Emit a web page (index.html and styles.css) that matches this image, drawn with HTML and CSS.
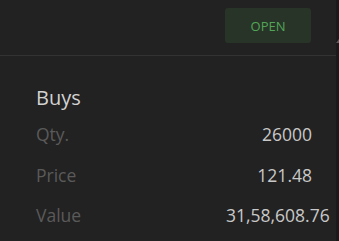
FILE: index.html
```html
<!DOCTYPE html>
<html>
<head>
<meta charset="utf-8">
<link rel="stylesheet" href="styles.css">
</head>
<body>
<div class="page">
  <div class="main">
    <div class="header">
      <button class="open-btn">OPEN</button>
    </div>
    <div class="section">
      <div class="title">Buys</div>
      <div class="row"><span class="label">Qty.</span><span class="value">26000</span></div>
      <div class="row"><span class="label">Price</span><span class="value">121.48</span></div>
      <div class="row"><span class="label">Value</span><span class="value">31,58,608.76</span></div>
    </div>
  </div>
  <div class="scroll"><span class="arrow"></span></div>
</div>
</body>
</html>
```
FILE: styles.css
```css
html, body {
  margin: 0;
  padding: 0;
  background: #222222;
  width: 339px;
  height: 241px;
  overflow: hidden;
}
.page {
  display: flex;
  height: 241px;
  font-family: "Open Sans", "Liberation Sans", sans-serif;
}
.main {
  flex: 1;
}
.header {
  height: 55px;
  display: flex;
  justify-content: flex-end;
  align-items: flex-start;
  padding-right: 25px;
  border-bottom: 1px solid #333333;
}
.open-btn {
  margin-top: 8px;
  width: 86px;
  height: 35px;
  border: none;
  border-radius: 3px;
  background: #283428;
  color: #52a556;
  font-family: "Open Sans", "Liberation Sans", sans-serif;
  font-size: 13px;
  padding: 0;
}
.section {
  padding: 29px 24px 0 36px;
}
.title {
  font-size: 20px;
  line-height: 26px;
  color: #d2d2d2;
  margin-bottom: 3.2px;
}
.row {
  display: flex;
  font-size: 17.5px;
  line-height: 40.6px;
}
.label {
  flex: 1;
  color: #5a5a5a;
}
.value {
  width: 86px;
  text-align: right;
  white-space: nowrap;
  color: #c8c8c8;
}
.scroll {
  width: 3px;
  background: #1a1a1a;
  position: relative;
}
.arrow {
  position: absolute;
  top: 39px;
  left: 0;
  width: 0;
  height: 0;
  border-left: 3px solid transparent;
  border-bottom: 4px solid #5a5a5a;
}
```
